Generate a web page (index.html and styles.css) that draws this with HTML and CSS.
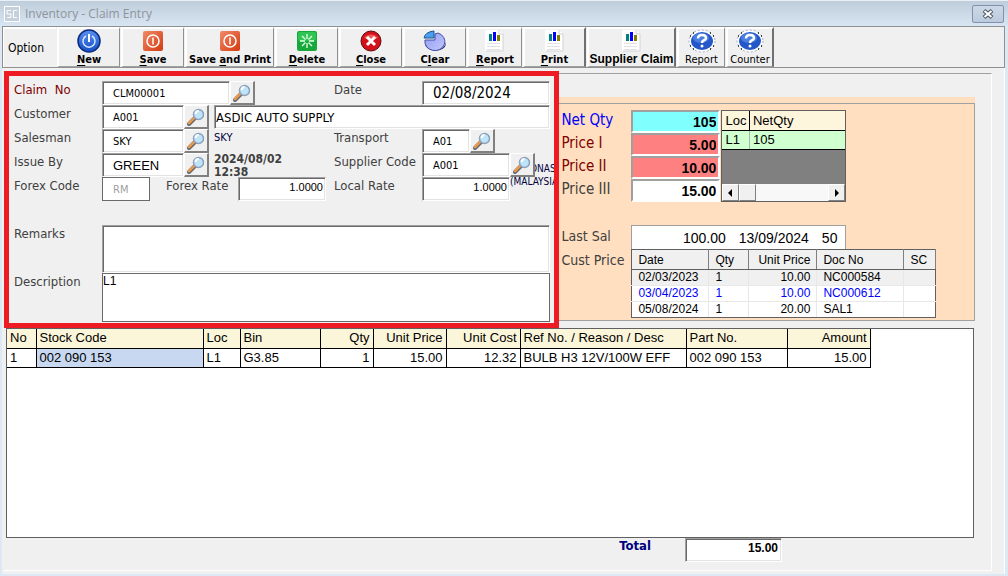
FILE: index.html
```html
<!DOCTYPE html>
<html lang="en">
<head>
    <meta charset="UTF-8">
    <meta name="viewport" content="width=device-width, initial-scale=1.0">
    <title>Inventory - Claim Entry</title>
    <link rel="stylesheet" href="styles.css">
</head>
<body>
    <!-- shared icons -->
    <svg class="sprite" width="0" height="0" aria-hidden="true">
        <defs>
            <linearGradient id="blueFill" x1="0" y1="0" x2="0" y2="1">
                <stop offset="0" stop-color="#5a90f0"/>
                <stop offset="1" stop-color="#1450c4"/>
            </linearGradient>
            <linearGradient id="redFill" x1="0" y1="0" x2="1" y2="1">
                <stop offset="0" stop-color="#f08a68"/>
                <stop offset="1" stop-color="#d43a10"/>
            </linearGradient>
            <linearGradient id="pieFill" x1="0" y1="0" x2="1" y2="1">
                <stop offset="0" stop-color="#8f9cf0"/>
                <stop offset="1" stop-color="#c3c8ff"/>
            </linearGradient>
        </defs>
        <symbol id="lens" viewBox="0 0 18 18">
            <path d="M2 16 L8 10" stroke="#6a6a72" stroke-width="4" stroke-linecap="round"/>
            <path d="M2 15 L7 10" stroke="#e79a4c" stroke-width="2.500" stroke-linecap="round"/>
            <circle cx="11.500" cy="6.500" r="5" fill="#bfe3f7" stroke="#8ba0bc" stroke-width="1.500"/>
            <path d="M8.500 6 a3 3 0 0 1 3 -3" stroke="#fff" stroke-width="2" fill="none"/>
        </symbol>
        <symbol id="stop" viewBox="0 0 20 20">
            <rect width="20" height="20" rx="2" fill="url(#redFill)"/>
            <circle cx="10" cy="10" r="6" fill="none" stroke="#fff" stroke-width="1.500"/>
            <path d="M10 6.500 V13.500" stroke="#fff" stroke-width="1.500"/>
        </symbol>
        <symbol id="chart" viewBox="0 0 20 22">
            <path d="M0 0 H14 L18 4 V21 H0 Z" fill="#fff"/>
            <path d="M14 0 V4 H18 M18 4 V21 H1" fill="none" stroke="#d2d2d8"/>
            <rect x="4" y="4" width="3" height="7" fill="#008080"/>
            <rect x="8" y="2" width="3" height="9" fill="#0000ff"/>
            <rect x="12" y="5" width="3" height="6" fill="#808000"/>
            <path d="M2 13.500 H15 M2 16.500 H15 M2 19.500 H15" stroke="#e2e2e2"/>
        </symbol>
        <symbol id="help" viewBox="0 0 28 24">
            <ellipse cx="14" cy="12" rx="13" ry="11" fill="#fff" stroke="#a8a8cc" stroke-dasharray="2 2"/>
            <path d="M5 4 h1 M22 4 h1 M2 7 h1 M25 7 h1 M2 17 h1 M25 17 h1 M5 20 h1 M22 20 h1" stroke="#111" stroke-width="1.500"/>
            <ellipse cx="14" cy="12" rx="11" ry="9" fill="#2458c8"/>
            <ellipse cx="13" cy="9" rx="8" ry="5" fill="#4a7fe0"/>
            <path d="M10 9.500 Q10 6 14 6 Q18 6 18 9 Q18 10.500 15.500 11.500 Q14 12.200 14 14" fill="none" stroke="#fff" stroke-width="2.500"/>
            <circle cx="14" cy="17" r="1.500" fill="#fff"/>
        </symbol>
    </svg>

    <div class="window">
        <header class="titlebar">
            <svg class="logo" viewBox="0 0 16 16" aria-hidden="true">
                <rect x="0.500" y="0.500" width="15" height="15" fill="none" stroke="#fff"/>
                <path d="M7 4.500 H3 V8 H7 V11.500 H3 M13 4.500 H9.500 V11.500 H13" fill="none" stroke="#fff"/>
            </svg>
            <h1>Inventory - Claim Entry</h1>
            <button class="win-close" aria-label="Close window">
                <svg viewBox="0 0 12 10" width="12" height="10">
                    <path d="M2 1.500 L10 8.500 M10 1.500 L2 8.500" stroke="#4b5260" stroke-width="4"/>
                    <path d="M2.500 2 L9.500 8 M9.500 2 L2.500 8" stroke="#fff" stroke-width="2"/>
                </svg>
            </button>
        </header>

        <nav class="toolbar">
            <span class="option">Option</span>
            <button class="tool">
                <svg viewBox="0 0 24 24" width="24" height="24">
                    <circle cx="12" cy="12" r="11" fill="url(#blueFill)" stroke="#0b2a80" stroke-width="1.500"/>
                    <path d="M9 7 A6 6 0 1 0 15 7" fill="none" stroke="#dce8ff" stroke-width="1.500"/>
                    <path d="M12 5 V13" stroke="#fff" stroke-width="2"/>
                </svg>
                <span><u>N</u>ew</span>
            </button>
            <button class="tool">
                <svg width="20" height="20"><use href="#stop"/></svg>
                <span><u>S</u>ave</span>
            </button>
            <button class="tool wide">
                <svg width="20" height="20"><use href="#stop"/></svg>
                <span>Save <u>a</u>nd Print</span>
            </button>
            <button class="tool">
                <svg viewBox="0 0 20 20" width="20" height="20">
                    <rect width="20" height="20" rx="2" fill="#16a83a"/>
                    <rect x="1" y="1" width="18" height="9" rx="2" fill="#2fc453"/>
                    <path d="M10 3 V8 M10 12 V17 M3 10 H8 M12 10 H17 M5 5 L8.500 8.500 M11.500 11.500 L15 15 M15 5 L11.500 8.500 M8.500 11.500 L5 15" stroke="#e9ffe9" stroke-width="1.300"/>
                </svg>
                <span><u>D</u>elete</span>
            </button>
            <button class="tool">
                <svg viewBox="0 0 22 22" width="22" height="22">
                    <circle cx="11" cy="11" r="10" fill="#d3111b" stroke="#5e0c10"/>
                    <path d="M4 8 A8 7 0 0 1 18 8 Q11 11 4 8" fill="#ee5a5a"/>
                    <path d="M7 7 L15 15 M15 7 L7 15" stroke="#fff" stroke-width="3"/>
                </svg>
                <span><u>C</u>lose</span>
            </button>
            <button class="tool">
                <svg viewBox="0 0 24 22" width="24" height="22">
                    <path d="M2 11 A10 8 0 0 0 23 12 V14 A10 7 0 0 1 2 13 Z" fill="#27306e"/>
                    <path d="M12 10 H2 A10 9 0 1 0 15 3 L12 4 Z" fill="url(#pieFill)" stroke="#4650a8"/>
                    <path d="M11 8 L1 8 Q2 2 11 1 Z" fill="#4aa0ee" stroke="#1c5596"/>
                </svg>
                <span>C<u>l</u>ear</span>
            </button>
            <button class="tool narrow">
                <svg width="20" height="22"><use href="#chart"/></svg>
                <span><u>R</u>eport</span>
            </button>
            <button class="tool dark-edge">
                <svg width="20" height="22"><use href="#chart"/></svg>
                <span><u>P</u>rint</span>
            </button>
            <button class="tool wide arial dark-edge">
                <svg width="20" height="22"><use href="#chart"/></svg>
                <span>Supplier Claim</span>
            </button>
            <button class="tool small">
                <svg width="28" height="24"><use href="#help"/></svg>
                <span>Report</span>
            </button>
            <button class="tool small dark-edge">
                <svg width="28" height="24"><use href="#help"/></svg>
                <span>Counter</span>
            </button>
        </nav>

        <main class="content">
            <div class="frame">
                <div class="upper">
                    <form class="claim">
                        <div class="row">
                            <label class="maroon" for="claimNo">Claim&nbsp; No</label>
                            <div class="group">
                                <input class="long pad" id="claimNo" value="CLM00001">
                                <button type="button" class="find" aria-label="Find claim"><svg><use href="#lens"/></svg></button>
                            </div>
                            <label for="date">Date</label>
                            <div class="group"><input class="fill pad big" id="date" value="02/08/2024"></div>
                        </div>
                        <div class="row customer">
                            <label for="customer">Customer</label>
                            <div class="group">
                                <input class="mid pad" id="customer" value="A001">
                                <button type="button" class="find" aria-label="Find customer"><svg><use href="#lens"/></svg></button>
                                <input class="fill name" aria-label="Customer name" value="ASDIC AUTO SUPPLY">
                            </div>
                        </div>
                        <div class="row">
                            <label for="salesman">Salesman</label>
                            <div class="group">
                                <input class="mid pad" id="salesman" value="SKY">
                                <button type="button" class="find" aria-label="Find salesman"><svg><use href="#lens"/></svg></button>
                                <span class="note">SKY</span>
                            </div>
                            <label for="transport">Transport</label>
                            <div class="group">
                                <input class="short pad" id="transport" value="A01">
                                <button type="button" class="find" aria-label="Find transport"><svg><use href="#lens"/></svg></button>
                            </div>
                        </div>
                        <div class="row">
                            <label for="issueBy">Issue By</label>
                            <div class="group">
                                <input class="mid pad sans" id="issueBy" value="GREEN">
                                <button type="button" class="find" aria-label="Find issuer"><svg><use href="#lens"/></svg></button>
                                <span class="note stamp">2024/08/02<br>12:38</span>
                            </div>
                            <label for="supplier">Supplier Code</label>
                            <div class="group supplier">
                                <input class="code pad" id="supplier" value="A001">
                                <button type="button" class="find" aria-label="Find supplier"><svg><use href="#lens"/></svg></button>
                                <span class="supplier-name"><span>ONAS</span><br>(MALAYSIA</span>
                            </div>
                        </div>
                        <div class="row">
                            <label for="forex">Forex Code</label>
                            <div class="group">
                                <input class="short forex" id="forex" value="RM" disabled>
                                <label class="rate-label" for="forexRate">Forex Rate</label>
                                <input class="code num" id="forexRate" value="1.0000">
                            </div>
                            <label for="localRate">Local Rate</label>
                            <div class="group"><input class="code num" id="localRate" value="1.0000"></div>
                        </div>
                        <div class="row memo first">
                            <label for="remarks">Remarks</label>
                            <textarea id="remarks"></textarea>
                        </div>
                        <div class="row memo">
                            <label for="description">Description</label>
                            <textarea class="flat" id="description">L1</textarea>
                        </div>
                    </form>

                    <section class="pricing">
                        <div class="pricing-body">
                            <div class="price-top">
                                <div class="prices">
                                    <label class="blue" for="netQty">Net Qty</label>
                                    <input class="cyan" id="netQty" value="105">
                                    <label class="maroon" for="price1">Price I</label>
                                    <input class="pink" id="price1" value="5.00">
                                    <label class="maroon" for="price2">Price II</label>
                                    <input class="pink" id="price2" value="10.00">
                                    <label for="price3">Price III</label>
                                    <input id="price3" value="15.00">
                                </div>
                                <div class="stock">
                                    <table>
                                        <thead><tr><th>Loc</th><th>NetQty</th></tr></thead>
                                        <tbody><tr><td>L1</td><td>105</td></tr></tbody>
                                    </table>
                                    <div class="scrollbar">
                                        <button aria-label="Scroll left"><svg viewBox="0 0 5 8" width="5" height="8"><path d="M4 0 V8 L0 4 Z"/></svg></button>
                                        <span class="thumb"></span>
                                        <button class="right" aria-label="Scroll right"><svg viewBox="0 0 5 8" width="5" height="8"><path d="M1 0 V8 L5 4 Z"/></svg></button>
                                    </div>
                                </div>
                            </div>
                            <div class="line last">
                                <span class="caption">Last Sal</span>
                                <output class="last-sale"><span>100.00</span><span>13/09/2024</span><span>50</span></output>
                            </div>
                            <div class="line">
                                <span class="caption">Cust Price</span>
                                <table class="history">
                                    <thead>
                                        <tr><th class="c-date">Date</th><th class="c-qty">Qty</th><th class="c-price">Unit Price</th><th class="c-doc">Doc No</th><th class="c-sc">SC</th></tr>
                                    </thead>
                                    <tbody>
                                        <tr class="grey"><td>02/03/2023</td><td>1</td><td class="r">10.00</td><td>NC000584</td><td></td></tr>
                                        <tr class="blue"><td>03/04/2023</td><td>1</td><td class="r">10.00</td><td>NC000612</td><td></td></tr>
                                        <tr><td>05/08/2024</td><td>1</td><td class="r">20.00</td><td>SAL1</td><td></td></tr>
                                    </tbody>
                                </table>
                            </div>
                        </div>
                    </section>
                </div>

                <div class="items">
                    <table>
                        <colgroup>
                            <col class="w-no"><col class="w-stock"><col class="w-loc"><col class="w-bin"><col class="w-qty">
                            <col class="w-price"><col class="w-cost"><col class="w-desc"><col class="w-part"><col class="w-amount">
                        </colgroup>
                        <thead>
                            <tr>
                                <th>No</th><th>Stock Code</th><th>Loc</th><th>Bin</th><th class="r">Qty</th>
                                <th class="r">Unit Price</th><th class="r">Unit Cost</th><th>Ref No. / Reason / Desc</th><th>Part No.</th><th class="r">Amount</th>
                            </tr>
                        </thead>
                        <tbody>
                            <tr>
                                <td>1</td><td class="selected">002 090 153</td><td>L1</td><td>G3.85</td><td class="r">1</td>
                                <td class="r">15.00</td><td class="r">12.32</td><td>BULB H3 12V/100W EFF</td><td>002 090 153</td><td class="r">15.00</td>
                            </tr>
                        </tbody>
                    </table>
                </div>

                <div class="total">
                    <label for="total">Total</label>
                    <input id="total" value="15.00">
                </div>
            </div>
        </main>
    </div>
</body>
</html>
```
FILE: styles.css
```css
* {
    box-sizing: border-box;
}
body {
    margin: 0;
    font-family: "DejaVu Sans Condensed", "DejaVu Sans", sans-serif;
    font-size: 12px;
    color: #000;
    background-color: #dce8f4;
}
button, input, textarea {
    font: inherit;
    color: inherit;
    margin: 0;
    padding: 0;
    border-radius: 0;
}
table {
    border-collapse: collapse;
    table-layout: fixed;
    font-family: "Liberation Sans", Arial, sans-serif;
}
th {
    font-weight: normal;
    text-align: left;
}
th, td {
    white-space: nowrap;
    overflow: hidden;
}
.r {
    text-align: right;
}
.sprite {
    position: absolute;
}
.maroon {
    color: #800000;
}
.blue {
    color: #0000ff;
}

/* window */
.window {
    min-height: 100vh;
    display: flex;
    flex-direction: column;
    border-top: 1px solid #e8eff6;
    padding: 0 3px 2px 2px;
}
.titlebar {
    display: flex;
    align-items: center;
    gap: 5px;
    height: 25px;
    margin: 0 -3px 0 -2px;
    padding: 0 4px;
    background: linear-gradient(#bfcddb, #d8e5f2);
}
.titlebar h1 {
    flex: 1;
    margin: 0;
    font-family: "Open Sans", sans-serif;
    font-size: 12px;
    font-weight: normal;
    color: #8d949c;
}
.logo {
    width: 16px;
    height: 16px;
    background-color: #c5d0da;
}
.win-close {
    width: 32px;
    height: 18px;
    border: 1px solid #8190ae;
    border-radius: 2px;
    background: linear-gradient(#cbd8e6, #bccbdc);
    line-height: 0;
}

/* toolbar */
.toolbar {
    display: flex;
    gap: 1px;
    height: 42px;
    border: 1px solid #909090;
    background-color: #f0f0f0;
}
.option {
    width: 53px;
    padding: 12px 4px;
    line-height: 14px;
    border-top: 2px solid #fff;
    border-left: 1px solid #fff;
}
.tool {
    width: 63px;
    display: flex;
    flex-direction: column;
    align-items: center;
    border: 0;
    border-top: 2px solid #fff;
    border-left: 2px solid #fff;
    border-right: 1px solid #909090;
    border-bottom: 1px solid #a0a0a0;
    background-color: #f0f0f0;
    font-size: 11px;
    font-weight: bold;
    line-height: 13px;
    white-space: nowrap;
}
.tool svg {
    margin: auto;
}
.tool.wide {
    width: 89px;
}
.tool.narrow {
    width: 55px;
}
.tool.small {
    width: 48px;
    font-weight: normal;
}
.tool.arial {
    font-family: "Liberation Sans", Arial, sans-serif;
    font-size: 12px;
}
.tool.dark-edge {
    border-right: 2px solid #707070;
}
.tool u {
    text-underline-offset: 2px;
}

/* content area */
.content {
    flex: 1;
    display: flex;
    padding: 5px 12px 3px 2px;
    background: #f0f0f0;
    border-right: 1px solid #fff;
}
.frame {
    flex: 1;
    min-width: 0;
    display: flex;
    flex-direction: column;
    padding-right: 16px;
    border-top: 1px solid #a0a0a0;
    border-right: 1px solid #fff;
    border-bottom: 1px solid #fff;
}
.upper {
    display: grid;
    grid-template-columns: minmax(0, 556fr) minmax(0, 416fr);
}

/* claim form */
.claim {
    margin-top: -3px;
    border: 5px solid #ed1c24;
    padding: 5px 4px 2px 5px;
    color: #404040;
    overflow: hidden;
}
.row {
    display: grid;
    grid-template-columns: 88px 232px 88px minmax(0, 1fr);
    height: 24px;
}
.row.customer {
    grid-template-columns: 88px minmax(0, 1fr);
}
.row label {
    font-size: 13px;
    line-height: 17px;
    white-space: nowrap;
}
.group {
    display: flex;
    min-width: 0;
}
.claim input, .claim textarea, .total input {
    border: 1px solid #a0a0a0;
    border-right-color: #fff;
    border-bottom-color: #fff;
    box-shadow: inset 1px 1px #696969, inset -1px -1px #e3e3e3;
    background-color: #fff;
    color: #000;
    outline: 0;
}
.claim input {
    height: 24px;
    min-width: 0;
    font-size: 11px;
}
.claim .pad {
    padding-left: 10px;
}
.claim .long {
    width: 128px;
}
.claim .mid {
    width: 82px;
}
.claim .code {
    width: 88px;
}
.claim .short {
    width: 48px;
}
.claim .fill {
    flex: 1;
}
.claim .big {
    font-size: 15px;
}
.claim .name {
    margin-left: 5px;
    padding-left: 1px;
    font-size: 13px;
}
.claim .sans {
    font-family: "Liberation Sans", Arial, sans-serif;
    font-size: 13px;
}
.claim .num {
    padding: 0 2px 4px 0;
    text-align: right;
    font-family: "Liberation Sans", Arial, sans-serif;
    font-size: 11px;
}
.claim .forex {
    padding-left: 10px;
    border-color: #696969;
    box-shadow: none;
    color: #a0a0a0;
}
.rate-label {
    width: 72px;
    margin-left: 16px;
}
.find {
    position: relative;
    z-index: 1;
    width: 25px;
    height: 24px;
    border: 1px solid #fff;
    border-right: 2px solid #808080;
    border-bottom: 2px solid #808080;
    background-color: #f0f0f0;
    line-height: 0;
}
.find svg {
    width: 18px;
    height: 18px;
}
.note {
    margin-left: 5px;
    font-size: 11px;
    line-height: 18px;
    color: #000040;
}
.stamp {
    font-size: 12px;
    font-weight: bold;
    line-height: 13px;
    color: #404040;
}
.supplier {
    position: relative;
}
/* long supplier names run on under the find button */
.supplier-name {
    position: absolute;
    left: 88px;
    top: 9px;
    font-size: 10px;
    line-height: 13px;
    color: #000040;
}
.supplier-name span {
    padding-left: 20px;
}
.row.memo {
    grid-template-columns: 88px minmax(0, 1fr);
    height: 48px;
}
.row.first {
    margin-top: 24px;
}
.claim textarea {
    resize: none;
    height: 48px;
    font-family: "Liberation Sans", Arial, sans-serif;
}
.claim .flat {
    height: 49px;
    border-color: #696969;
    box-shadow: none;
}

/* pricing panel */
.pricing {
    margin-top: 23px;
    padding-top: 6px;
    background-color: #ffdfbf;
    align-self: start;
    color: #404040;
    font-size: 14px;
}
.pricing-body {
    border: 1px solid #a0a0a0;
    border-left: 0;
    padding: 6px 2px 2px;
}
.price-top {
    display: flex;
    gap: 1px;
}
.prices {
    display: grid;
    grid-template-columns: 70px 89px;
    grid-template-rows: repeat(4, 23px);
    font-size: 15px;
    line-height: 20px;
}
.prices input {
    height: 23px;
    min-width: 0;
    border: 2px solid #a0a0a0;
    border-right-color: #fff;
    border-bottom-color: #fff;
    padding-right: 2px;
    background-color: #fff;
    color: #000;
    font-family: "Liberation Sans", Arial, sans-serif;
    font-size: 14px;
    font-weight: bold;
    text-align: right;
}
.prices .cyan {
    background-color: #80ffff;
}
.prices .pink {
    background-color: #ff8080;
}
.stock {
    width: 125px;
    height: 92px;
    display: flex;
    flex-direction: column;
    justify-content: space-between;
    border: 1px solid #606060;
    background-color: #808080;
    color: #000;
}
.stock table {
    width: 100%;
    font-size: 13px;
}
.stock th, .stock td {
    height: 19px;
    padding: 0 3px;
    border-bottom: 1px solid #000;
}
.stock th {
    background-color: #fdf5dc;
}
.stock th:first-child {
    width: 27px;
    border-right: 1px solid #000;
}
.stock td {
    background-color: #d0ffd0;
}
.stock td:first-child {
    border-right: 1px solid #b0b0b0;
}
.scrollbar {
    display: flex;
    height: 17px;
    background-color: #f8f8f8;
}
.scrollbar button, .thumb {
    width: 17px;
    border: 1px solid #fff;
    border-right-color: #808080;
    border-bottom-color: #808080;
    background-color: #f0f0f0;
}
.scrollbar button {
    line-height: 0;
}
.scrollbar .right {
    margin-left: auto;
}
.line {
    display: flex;
}
.line.last {
    margin-top: 23px;
}
.caption {
    width: 70px;
    line-height: 22px;
    white-space: nowrap;
}
.last-sale {
    display: flex;
    justify-content: flex-end;
    gap: 13px;
    width: 215px;
    height: 24px;
    padding-right: 8px;
    border: 1px solid #a0a0a0;
    border-bottom: 0;
    background-color: #fff;
    color: #000;
    font-family: "Liberation Sans", Arial, sans-serif;
    line-height: 24px;
}
.history {
    width: 305px;
    border: 1px solid #606060;
    background-color: #fff;
    color: #000;
    font-size: 12px;
}
.history th {
    height: 20px;
    padding: 0 6px;
    border-right: 1px solid #808080;
    border-bottom: 1px solid #606060;
    background-color: #f0f0f0;
}
.history td {
    height: 16px;
    padding: 0 6px;
    line-height: 15px;
    border-right: 1px solid #e8e8e8;
    border-bottom: 1px solid #e8e8e8;
}
.history td:last-child {
    border-right-color: #606060;
}
.history tr:last-child td {
    border-bottom-color: #606060;
}
.history .grey {
    background-color: #f0f0f0;
}
.history .blue {
    color: #0000ff;
}
.c-date {
    width: 77px;
}
.c-qty {
    width: 40px;
}
.c-price {
    width: 68px;
}
.history .c-price {
    text-align: right;
}
.c-doc {
    width: 87px;
}

/* claim items */
.items {
    flex: 1;
    margin: 0 1px 0 2px;
    border: 1px solid #606060;
    background-color: #fff;
}
.items table {
    width: 863px;
    font-size: 13px;
}
.items th, .items td {
    height: 19px;
    padding: 0 3px;
    line-height: 18px;
    border-right: 1px solid #000;
    border-bottom: 1px solid #000;
}
.items th {
    background-color: #fbf5d9;
}
.items .selected {
    background-color: #c8d8f0;
}
.w-no {
    width: 29px;
}
.w-stock {
    width: 167px;
}
.w-loc {
    width: 37px;
}
.w-bin {
    width: 80px;
}
.w-qty {
    width: 53px;
}
.w-price {
    width: 73px;
}
.w-cost {
    width: 74px;
}
.w-desc {
    width: 166px;
}
.w-part {
    width: 101px;
}
.w-amount {
    width: 83px;
}

/* total */
.total {
    display: flex;
    justify-content: flex-end;
    gap: 34px;
    margin-bottom: 8px;
    padding-right: 193px;
    font-weight: bold;
}
.total label {
    font-size: 13px;
    line-height: 16px;
    color: #000080;
}
.total input {
    width: 97px;
    height: 24px;
    padding: 0 3px 4px 0;
    font-family: "Liberation Sans", Arial, sans-serif;
    text-align: right;
}
```
